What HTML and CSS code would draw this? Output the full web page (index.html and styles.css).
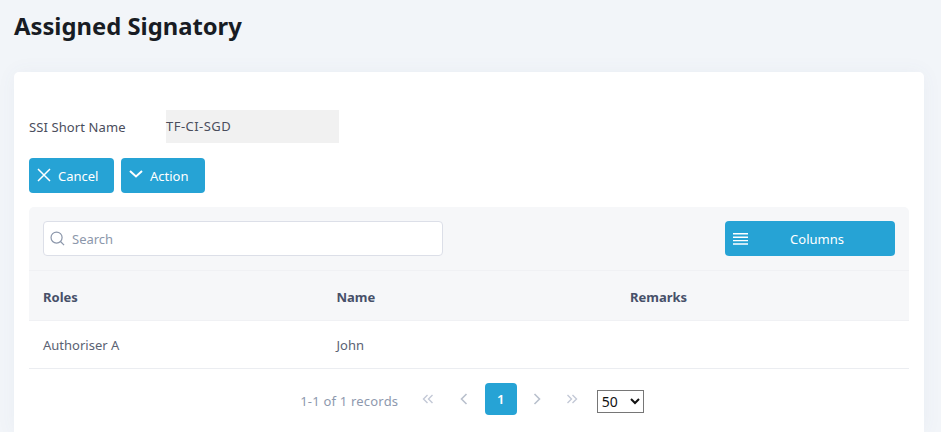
FILE: index.html
```html
<!DOCTYPE html>
<html lang="en">
<head>
<meta charset="utf-8">
<title>Assigned Signatory</title>
<link rel="stylesheet" href="styles.css">
</head>
<body>
<main class="page">
  <h1 class="title">Assigned Signatory</h1>
  <section class="card">
    <div class="field">
      <label class="field-label">SSI Short Name</label>
      <div class="field-value">TF-CI-SGD</div>
    </div>
    <div class="actions">
      <button class="btn btn-cancel">
        <svg class="btn-icon" viewBox="0 0 14 14" width="14" height="14"><path d="M1 1l12 12M13 1L1 13" fill="none" stroke="#fff" stroke-width="1.5"/></svg>
        Cancel
      </button>
      <button class="btn btn-action">
        <svg class="btn-icon" viewBox="0 0 14 8" width="14" height="8"><path d="M1 1l6 5.5L13 1" fill="none" stroke="#fff" stroke-width="2"/></svg>
        Action
      </button>
    </div>
    <div class="table-wrap">
      <div class="toolbar">
        <div class="search">
          <svg class="search-icon" viewBox="0 0 16 16" width="15" height="15"><circle cx="7" cy="7" r="5.9" fill="none" stroke="#8c97ab" stroke-width="1.3"/><path d="M11.2 11.2l3.8 3.8" stroke="#8c97ab" stroke-width="1.3" fill="none"/></svg>
          <span class="search-text">Search</span>
        </div>
        <button class="columns-btn">
          <svg class="columns-icon" viewBox="0 0 15 12" width="15" height="12"><path d="M0 .8h15M0 4.2h15M0 7.6h15M0 11h15" stroke="#fff" stroke-width="1.4" fill="none"/></svg>
          <span class="columns-text">Columns</span>
        </button>
      </div>
      <div class="row row-head">
        <div>Roles</div><div>Name</div><div>Remarks</div>
      </div>
      <div class="row row-body">
        <div>Authoriser A</div><div>John</div><div></div>
      </div>
    </div>
    <div class="pager">
      <span class="records">1-1 of 1 records</span>
      <svg class="pg pg-first" viewBox="0 0 12 10" width="12" height="10"><path d="M5.5 1L1.5 5l4 4M10.5 1l-4 4 4 4" fill="none" stroke="#c3c9d6" stroke-width="1.4"/></svg>
      <svg class="pg pg-prev" viewBox="0 0 8 12" width="8" height="12"><path d="M6.5 1L1.5 6l5 5" fill="none" stroke="#b9c0cd" stroke-width="1.6"/></svg>
      <span class="pg-current">1</span>
      <svg class="pg pg-next" viewBox="0 0 8 12" width="8" height="12"><path d="M1.5 1l5 5-5 5" fill="none" stroke="#b9c0cd" stroke-width="1.6"/></svg>
      <svg class="pg pg-last" viewBox="0 0 12 10" width="12" height="10"><path d="M1.5 1l4 4-4 4M6.5 1l4 4-4 4" fill="none" stroke="#c3c9d6" stroke-width="1.4"/></svg>
      <select class="page-size"><option>50</option></select>
    </div>
  </section>
</main>
</body>
</html>
```
FILE: styles.css
```css
* { box-sizing: border-box; }
html, body { margin: 0; height: 100%; overflow: hidden; }
body { background: #f2f5f9; font-family: "Noto Sans", "Open Sans", sans-serif; font-size: 13px; color: #3f4254; }
.page { display: flex; flex-direction: column; height: 100vh; padding: 9px 17px 0 14px; }
.title { margin: 0; font-size: 23.8px; line-height: 34px; font-weight: 700; color: #181c24; }
.card { flex: 1; margin-top: 29px; background: #fff; border-radius: 5px 5px 0 0; padding: 38px 15px 0; box-shadow: 0 0 20px rgba(80, 100, 140, 0.05); }
.field { display: flex; align-items: center; height: 33px; }
.field-label { width: 137px; color: #4a4d5c; letter-spacing: 0.1px; }
.field-value { width: 173px; height: 33px; line-height: 33px; background: #f1f1f1; color: #4a4d5c; letter-spacing: 0.45px; }
.actions { display: flex; gap: 7px; margin-top: 15px; }
.btn { display: flex; align-items: center; height: 35px; border: 0; border-radius: 4px; background: #26a3d5; color: #fff; font: inherit; padding: 0; }
.btn-cancel { width: 85px; padding-left: 8px; }
.btn-action { width: 84px; padding-left: 8px; }
.btn-icon { margin: 0 7px 1px 0; }
.btn-action .btn-icon { margin-bottom: 3px; }
.table-wrap { margin-top: 14px; }
.toolbar { display: flex; justify-content: space-between; align-items: center; height: 64px; padding: 0 14px; background: #f6f7f9; border-radius: 5px 5px 0 0; border-bottom: 1px solid #f0f1f4; }
.search { display: flex; align-items: center; width: 400px; height: 35px; background: #fff; border: 1px solid #dcdfe8; border-radius: 4px; padding-left: 6px; }
.search-icon { margin-right: 7px; }
.search-text { color: #8c97ab; }
.columns-btn { display: flex; align-items: center; width: 170px; height: 35px; border: 0; border-radius: 4px; background: #26a3d5; color: #fff; font: inherit; padding: 0 0 0 8px; }
.columns-text { flex: 1; text-align: center; padding-right: 9px; }
.row { display: grid; grid-template-columns: 293.5px 293.5px 1fr; padding: 0 14px; align-items: center; }
.row-head { height: 50px; padding-top: 2px; background: #f6f7f9; font-weight: 700; color: #475069; border-bottom: 1px solid #f0f1f4; }
.row-body { height: 48px; color: #5a6272; border-bottom: 1px solid #ebedf1; }
.pager { display: flex; align-items: center; justify-content: center; height: 64px; color: #8e99ae; }
.records { margin-left: 6px; letter-spacing: 0.2px; }
.pg { flex: none; margin-bottom: 4px; }
.pg-first { margin-left: 24px; }
.pg-prev { margin-left: 25.5px; }
.pg-current { width: 32px; height: 32px; line-height: 32px; margin: 0 0 4px 17px; text-align: center; background: #26a3d5; color: #fff; border-radius: 4px; font-weight: 600; }
.pg-next { margin-left: 16px; }
.pg-last { margin-left: 25.5px; }
.page-size { margin-left: 18.5px; width: 47px; height: 23px; font: 14px "Noto Sans", sans-serif; background: #fff; color: #111; border: 1px solid #767676; border-radius: 0; }
```
